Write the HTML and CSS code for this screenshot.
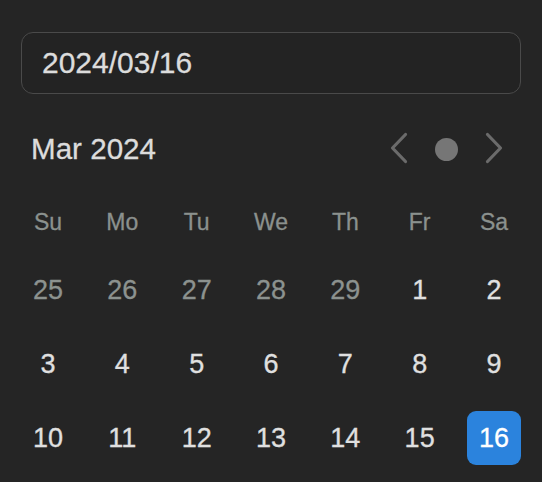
FILE: index.html
```html
<!DOCTYPE html>
<html lang="en">
<head>
<meta charset="utf-8">
<title>Date picker</title>
<link rel="stylesheet" href="styles.css">
</head>
<body>
<div class="picker">
  <div class="date-input">2024/03/16</div>
  <div class="header">
    <div class="month">Mar 2024</div>
    <div class="nav">
      <button class="nav-btn" aria-label="Previous month">
        <svg width="48" height="50" viewBox="0 0 48 50"><path d="M30.5 10.5 L17.5 24 L30.5 37.5" fill="none" stroke="#6b6b6b" stroke-width="3.2" stroke-linecap="round" stroke-linejoin="round"/></svg>
      </button>
      <button class="nav-btn" aria-label="Today">
        <svg width="48" height="50" viewBox="0 0 48 50"><circle cx="23.5" cy="25.5" r="11.5" fill="#767676"/></svg>
      </button>
      <button class="nav-btn" aria-label="Next month">
        <svg width="48" height="50" viewBox="0 0 48 50"><path d="M16.5 10.5 L29.5 24 L16.5 37.5" fill="none" stroke="#6b6b6b" stroke-width="3.2" stroke-linecap="round" stroke-linejoin="round"/></svg>
      </button>
    </div>
  </div>
  <div class="weekdays">
    <div>Su</div><div>Mo</div><div>Tu</div><div>We</div><div>Th</div><div>Fr</div><div>Sa</div>
  </div>
  <div class="days">
    <div class="day muted">25</div>
    <div class="day muted">26</div>
    <div class="day muted">27</div>
    <div class="day muted">28</div>
    <div class="day muted">29</div>
    <div class="day">1</div>
    <div class="day">2</div>
    <div class="day">3</div>
    <div class="day">4</div>
    <div class="day">5</div>
    <div class="day">6</div>
    <div class="day">7</div>
    <div class="day">8</div>
    <div class="day">9</div>
    <div class="day">10</div>
    <div class="day">11</div>
    <div class="day">12</div>
    <div class="day">13</div>
    <div class="day">14</div>
    <div class="day">15</div>
    <div class="day selected">16</div>
  </div>
</div>
</body>
</html>
```

FILE: styles.css
```css
html, body {
  margin: 0;
  padding: 0;
  background: #252525;
  height: 100%;
  overflow: hidden;
}

body {
  font-family: "Liberation Sans", Arial, Helvetica, sans-serif;
  color: #dedede;
  -webkit-text-stroke: 0.3px currentColor;
}

.picker {
  width: 500px;
  margin: 32px 21px 0 21px;
}

.date-input {
  box-sizing: border-box;
  height: 62px;
  border: 1.5px solid #4a4a4a;
  border-radius: 12px;
  padding-left: 20px;
  display: flex;
  align-items: center;
  font-size: 30px;
  color: #dcdcdc;
  background: #232323;
}

.header {
  margin-top: 30px;
  height: 50px;
  display: flex;
  align-items: center;
  justify-content: space-between;
  padding: 0 2px 0 10px;
}

.month {
  font-size: 29.6px;
  line-height: 1;
  color: #dcdcdc;
}

.nav {
  display: flex;
}

.nav-btn {
  width: 48px;
  height: 50px;
  padding: 0;
  margin: 0;
  border: 0;
  background: transparent;
  display: block;
}

.nav-btn svg {
  display: block;
}

.weekdays {
  margin-top: 28px;
  height: 40px;
  display: grid;
  grid-template-columns: repeat(7, 54px);
  justify-content: space-between;
  align-items: center;
  font-size: 23px;
  line-height: 1;
  color: #8b918e;
  text-align: center;
}

.days {
  margin-top: 21px;
  display: grid;
  grid-template-columns: repeat(7, 54px);
  grid-auto-rows: 54px;
  row-gap: 20px;
  justify-content: space-between;
}

.day {
  display: flex;
  align-items: center;
  justify-content: center;
  font-size: 27px;
  line-height: 1;
  color: #e0e0e0;
  border-radius: 9px;
}

.day.muted {
  color: #8c928f;
}

.day.selected {
  background: #2b83dd;
  color: #ffffff;
}
```
